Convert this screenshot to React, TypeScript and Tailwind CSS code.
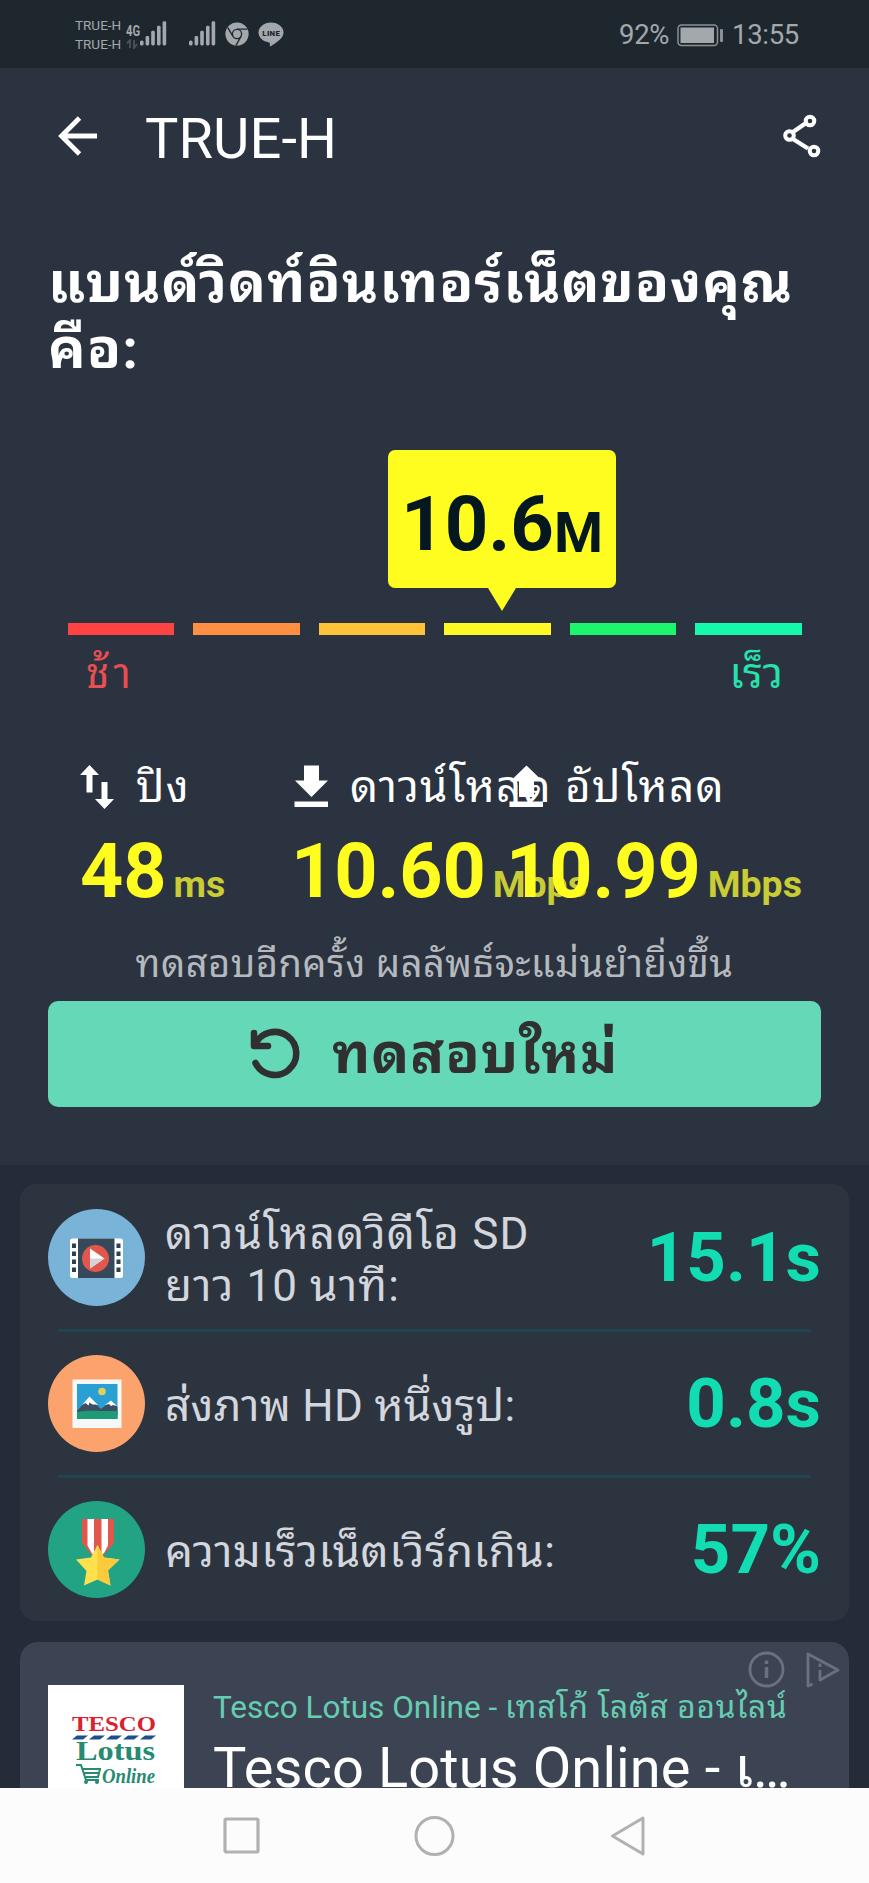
import type { ReactNode } from "react";

function Signal() {
  return (
    <svg width="27" height="26" viewBox="0 0 27 26" fill="#a3a8ad">
      <rect x="0" y="19.5" width="3.6" height="5" rx="1.6" />
      <rect x="5.6" y="15" width="3.6" height="9.5" rx="1.4" />
      <rect x="11.2" y="9.8" width="3.6" height="14.7" rx="1.4" />
      <rect x="17" y="4.8" width="3.6" height="19.7" rx="1.4" />
      <rect x="22.6" y="0.3" width="3.6" height="24.2" rx="1.4" />
    </svg>
  );
}

function StatusBar() {
  return (
    <header className="flex h-[68px] items-center bg-[#1f272e] pr-[70px] pl-[75px] text-[#a3a8ad]">
      <div className="flex w-[51px] flex-col pt-px text-[13.5px] leading-[19px]">
        <span>TRUE-H</span>
        <span>TRUE-H</span>
      </div>
      <div className="flex w-[14px] flex-col items-start pt-[3px]">
        <span className="w-[14px] origin-left scale-x-[0.8] text-[14px] leading-[16px] font-bold">4G</span>
        <svg width="12" height="10" viewBox="0 0 12 10" fill="none" stroke="#4b545c" strokeWidth="1.8">
          <path d="M4 9V1L1 4.5M8 1v8l3-4" />
        </svg>
      </div>
      <div className="flex items-center">
        <Signal />
        <div className="w-[22px]" />
        <Signal />
      </div>
      <svg className="ml-[9px]" width="24" height="24" viewBox="0 0 24 24">
        <circle cx="12" cy="12" r="11.6" fill="#a3a8ad" />
        <circle cx="12" cy="12" r="4.6" fill="none" stroke="#1f272e" strokeWidth="1.3" />
        <path d="M12 7.2h10.5M8 14.4 2.6 5.4M16 14.4 11 23.4" stroke="#1f272e" strokeWidth="1.3" fill="none" />
      </svg>
      <svg className="ml-[9px]" width="26" height="25" viewBox="0 0 26 25">
        <path
          d="M13 .6C6 .6.5 5 .5 10.6c0 5 4.500 9 10.500 9.800 1 .2 1 1 .8 3.500 0 .4.4.6.9.300C19 20.500 25.500 16 25.500 10.600 25.500 5 20 .6 13 .6z"
          fill="#a3a8ad"
        />
        <text x="4.300" y="14" fontSize="7.800" fontWeight="900" fontFamily="Roboto" textLength="17.500" fill="#1f272e">
          LINE
        </text>
      </svg>
      <div className="ml-auto flex items-center pt-0.5 text-[27.5px] leading-[34px]">
        <span className="w-[58px] tracking-[-0.3px]">92%</span>
        <svg width="47" height="23" viewBox="0 0 47 23">
          <rect x="1" y="1" width="39.500" height="20.500" rx="3.500" fill="none" stroke="#8b9095" strokeWidth="1.500" />
          <rect x="3.500" y="3.500" width="33.500" height="15.500" fill="#a3a8ad" />
          <rect x="43" y="5" width="3" height="13" rx="1" fill="#8b9095" />
        </svg>
        <span className="w-[75px] pl-[8px] tracking-[-0.3px]">13:55</span>
      </div>
    </header>
  );
}

function TitleBar() {
  return (
    <div className="flex h-[136px] items-center pr-[48px] pl-[58px] text-white">
      <svg width="40" height="40" viewBox="0 0 40 40" fill="none" stroke="currentColor" strokeWidth="4.800">
        <path d="M21.500 2 3.500 20l18 18M4 20h35" />
      </svg>
      <h1 className="ml-[47px] pt-[5px] text-[56px] leading-[64px] tracking-[0.1px]">TRUE-H</h1>
      <svg className="ml-auto" width="38" height="44" viewBox="0 0 38 44" fill="none" stroke="currentColor" strokeWidth="4">
        <path d="M23 9 10 18M10 25l15 9.500" strokeWidth="4.400" />
        <circle cx="27" cy="7" r="4.300" />
        <circle cx="6.500" cy="21.500" r="4.300" />
        <circle cx="31" cy="37" r="4.300" />
      </svg>
    </div>
  );
}

function Gauge() {
  return (
    <section className="mt-[68px]">
      <div className="ml-[388px] flex w-[228px] flex-col items-center">
        <div className="flex h-[138px] w-full items-baseline justify-center rounded-[7px] bg-[#fffd20] pt-[34px] font-bold text-[#06181f]">
          <span className="text-[76px] leading-[80px]">10.6</span>
          <span className="translate-y-0.5 text-[56px] leading-[56px]">M</span>
        </div>
        <svg width="28" height="23" viewBox="0 0 28 23">
          <path d="M0 0h28L14 23z" fill="#fffd20" />
        </svg>
      </div>
      <div className="mx-[67.500px] mt-3 grid h-3 grid-cols-6 gap-[19px]">
        <div className="bg-[#ff4242]" />
        <div className="bg-[#ff8f42]" />
        <div className="bg-[#ffc238]" />
        <div className="bg-[#fff824]" />
        <div className="bg-[#1cf56c]" />
        <div className="bg-[#16f8ac]" />
      </div>
      <div className="mt-[14px] flex justify-between pr-[86px] pl-[86px] text-[42px] leading-[50px]">
        <span className="tracking-[4px] text-[#e84e52]">ช้า</span>
        <span className="text-[#26e2ac]">เร็ว</span>
      </div>
    </section>
  );
}

function Stat({ icon, label, value, unit, width }: { icon: ReactNode; label: string; value: string; unit: string; width: string }) {
  return (
    <div className={`shrink-0 whitespace-nowrap ${width}`}>
      <div className="flex h-[60px] items-center text-white">
        {icon}
        <span className="ml-[22px] text-[44px] leading-[60px] tracking-[1.3px]">{label}</span>
      </div>
      <div className="mt-[14px] flex items-baseline font-bold text-[#fffd20]">
        <span className="text-[75.500px] leading-[80px] tracking-[-0.1px]">{value}</span>
        <span className="ml-[7px] text-[37.500px] leading-[40px] text-[#c9cc35]">{unit}</span>
      </div>
    </div>
  );
}

function Stats() {
  return (
    <section className="mt-[58px] flex h-[154px] pl-[80px]">
      <Stat
        width="w-[211px]"
        label="ปิง"
        value="48"
        unit="ms"
        icon={
          <svg className="shrink-0" width="34" height="44" viewBox="0 0 34 44" fill="#fff">
            <path d="M9.500 0 19 10h-6.500v17.500h-6V10H0zM24.500 44 15 34h6.500V17h6v17H34z" />
          </svg>
        }
      />
      <Stat
        width="w-[215px]"
        label="ดาวน์โหลด"
        value="10.60"
        unit="Mbps"
        icon={
          <svg className="ml-[3px] shrink-0" width="34" height="44" viewBox="0 0 34 44" fill="#fff">
            <path d="M10 .5h15v15h9L17.500 32 1 15.500h9zM.5 36.500H34v5.500H.5z" />
          </svg>
        }
      />
      <Stat
        width="w-[300px]"
        label="อัปโหลด"
        value="10.99"
        unit="Mbps"
        icon={
          <svg className="ml-[3px] shrink-0" width="34" height="44" viewBox="0 0 34 44" fill="#fff">
            <path d="M17.500.5 34 16.500h-9V32H10V16.500H1zM.5 36.500H34v5.500H.5z" />
          </svg>
        }
      />
    </section>
  );
}

function VideoIcon() {
  return (
    <svg className="shrink-0" width="97" height="97" viewBox="0 0 97 97">
      <circle cx="48.500" cy="48.500" r="48.500" fill="#7ab3d8" />
      <rect x="22" y="29.500" width="53" height="39.500" rx="2.500" fill="#fff" />
      <rect x="30" y="29.500" width="36.500" height="39.500" fill="#35495a" />
      <g fill="#2d4050">
        <path d="M24 34.500h4v4.500h-4zM24 42.500h4V47h-4zM24 50.500h4V55h-4zM24 58.500h4V63h-4z" />
        <path d="M68.500 34.500h4v4.500h-4zM68.500 42.500h4V47h-4zM68.500 50.500h4V55h-4zM68.500 58.500h4V63h-4z" />
      </g>
      <circle cx="47.500" cy="49.500" r="13.500" fill="#e2574c" />
      <path d="M42 39.500v20L56.500 49.500z" fill="#fff" />
      <path d="M42 49.500v10l14.500-10z" fill="#d5d3d5" />
    </svg>
  );
}

function PhotoIcon() {
  return (
    <svg className="shrink-0" width="97" height="97" viewBox="0 0 97 97">
      <circle cx="48.500" cy="48.500" r="48.500" fill="#fca26c" />
      <rect x="24.500" y="24.500" width="49" height="48.500" fill="#f6f8f7" />
      <rect x="29" y="29" width="40.500" height="35" fill="#2a9fd4" />
      <circle cx="54" cy="36.500" r="3.800" fill="#dfcf5c" />
      <path d="m29 56 12-13.500L53 54l10-8 6.500 6v8H29z" fill="#3d4f63" />
      <path d="m34 50 7.500-8.500L50 50l-3-.5-2.500 0-3-2-1 3-3-2.500zM57 50l6-4.500 6 5.500-4-1-2 1-2-2z" fill="#fff" />
      <path d="M29 57c12-2.500 26-.5 40.500-1v8H29z" fill="#1f9a76" />
    </svg>
  );
}

function MedalIcon() {
  return (
    <svg className="shrink-0" width="97" height="97" viewBox="0 0 97 97">
      <circle cx="48.500" cy="48.500" r="48.500" fill="#21a384" />
      <path d="M34 18h32v24L54 56h-9L34 42z" fill="#e2574c" />
      <path d="M39.500 18h6.500v36l-2-1.500-4.500-8zM53.500 18H60v26.500L56 52l-2.500 2z" fill="#fff" />
      <path d="m49.500 44 6.500 12.500 15.500 2-11.500 11L62.500 84.500l-13-6-13.500 6L38.500 70 28 58.500l15-2z" fill="#ffe14d" />
      <path d="m49.500 44 6.500 12.500 15.500 2-11.500 11L62.500 84.500l-13-6z" fill="#fccb3c" />
    </svg>
  );
}

function ResultRow({ icon, value, children }: { icon: ReactNode; value: string; children: ReactNode }) {
  return (
    <div className="flex h-[97px] items-center px-[28px]">
      {icon}
      <div className="ml-[20px] pt-[5px] text-[44px] leading-[52px] text-[#d3d6dd]">{children}</div>
      <div className="ml-auto text-[69px] leading-[97px] font-bold text-[#12dcb2]">{value}</div>
    </div>
  );
}

function Results() {
  return (
    <section className="mx-[20px] mt-[19px] flex h-[437px] flex-col rounded-[16px] bg-[#2c3440] pt-[25px] whitespace-nowrap">
      <ResultRow icon={<VideoIcon />} value="15.1s">
        <span className="tracking-[1.100px]">ดาวน์โหลดวิดีโอ SD</span>
        <br />
        <span className="tracking-[1.100px]">ยาว 10 นาที:</span>
      </ResultRow>
      <div className="mx-[38px] my-[23px] h-[3px] shrink-0 bg-[#214451]" />
      <ResultRow icon={<PhotoIcon />} value="0.8s">
        <span className="tracking-[0.300px]">ส่งภาพ HD หนึ่งรูป:</span>
      </ResultRow>
      <div className="mx-[38px] mt-[23px] mb-[23px] h-[3px] shrink-0 bg-[#214451]" />
      <ResultRow icon={<MedalIcon />} value="57%">
        <span className="tracking-[0.400px]">ความเร็วเน็ตเวิร์กเกิน:</span>
      </ResultRow>
    </section>
  );
}

function LotusLogo() {
  return (
    <svg className="shrink-0 bg-white" width="136" height="136" viewBox="0 0 136 136">
      <g fontFamily="Liberation Serif" fontWeight="700">
        <text x="24" y="46" fontSize="21.500" textLength="84" lengthAdjust="spacingAndGlyphs" fill="#d8232f">
          TESCO
        </text>
        <text x="28" y="75" fontSize="28" textLength="79" lengthAdjust="spacingAndGlyphs" fill="#278a72">
          Lotus
        </text>
        <text x="54" y="98" fontSize="21" fontStyle="italic" textLength="53" lengthAdjust="spacingAndGlyphs" fill="#278a72">
          Online
        </text>
      </g>
      <path
        d="m24 54.500 5-4h11l-5 4zM41 54.500l5-4h11l-5 4zM58 54.500l5-4h11l-5 4zM75 54.500l5-4h11l-5 4zM92 54.500l5-4h11l-5 4z"
        fill="#1c4f8c"
      />
      <path d="M28 80h5l5 15h13M35 84h17l-2 8H38M36 88h14" fill="none" stroke="#278a72" strokeWidth="2" />
      <circle cx="38" cy="97" r="2" fill="#278a72" />
      <circle cx="49" cy="97" r="2" fill="#278a72" />
    </svg>
  );
}

function Ad() {
  return (
    <section className="relative mx-[20px] mt-[21px] flex h-[200px] shrink-0 rounded-[18px] bg-[#3c4454] pt-[43px] pl-[28px]">
      <LotusLogo />
      <div className="ml-[29px] whitespace-nowrap">
        <p className="mt-[3px] text-[31.500px] leading-[40px] text-[#66cdb2]">
          Tesco Lotus Online - <span className="tracking-[0.800px]">เทสโก้ โลตัส ออนไลน์</span>
        </p>
        <p className="mt-[8px] text-[56px] leading-[64px] tracking-[0.100px] text-white">Tesco Lotus Online - เ…</p>
      </div>
      <div className="absolute top-[9px] right-[9px] flex gap-[20px]">
        <svg width="37" height="38" viewBox="0 0 37 38" fill="none" stroke="#697080" strokeWidth="2.800">
          <circle cx="18.500" cy="18.500" r="16.500" />
          <path d="M18.500 9.500v3.500M18.500 16v11" strokeWidth="3.500" />
        </svg>
        <svg width="35" height="38" viewBox="0 0 35 38" fill="none" stroke="#697080" strokeWidth="2.800" strokeLinejoin="round">
          <path d="M7.500 33 3 35V3l30 16-18 10V19M15 12.500V16" />
        </svg>
      </div>
    </section>
  );
}

function NavBar() {
  return (
    <nav className="flex h-[95px] shrink-0 items-center bg-[#fcfcfc] pl-[223px]">
      <svg width="37" height="40" viewBox="0 0 37 40" fill="none" stroke="#b1b1b1" strokeWidth="3.200">
        <rect x="2" y="3" width="33" height="33" rx="1.500" />
      </svg>
      <svg className="ml-[154px]" width="42" height="42" viewBox="0 0 42 42" fill="none" stroke="#b1b1b1" strokeWidth="3">
        <circle cx="20.500" cy="21" r="18.500" />
      </svg>
      <svg className="ml-[153px]" width="38" height="42" viewBox="0 0 38 42" fill="none" stroke="#b1b1b1" strokeWidth="3" strokeLinejoin="round">
        <path d="M34 3v36L3.500 21z" />
      </svg>
    </nav>
  );
}

export default function App() {
  return (
    <div className="flex h-[1883px] w-[869px] flex-col overflow-hidden bg-[#252c39] font-['Roboto','Noto_Sans_Thai_Looped','Noto_Sans_Thai','Noto_Sans',sans-serif]">
      <main className="h-[1788px] shrink-0 overflow-hidden">
        <div className="h-[1165px] bg-[#2a333f]">
          <StatusBar />
          <TitleBar />
          <h2 className="mt-[46px] pl-[48px] text-[56px] leading-[66px] font-bold tracking-[1px] whitespace-nowrap text-white">
            แบนด์วิดท์อินเทอร์เน็ตของคุณ
            <br />
            คือ:
          </h2>
          <Gauge />
          <Stats />
          <p className="mt-[23px] text-center text-[38px] leading-[60px] tracking-[0.500px] whitespace-nowrap text-[#b5b9be]">
            ทดสอบอีกครั้ง ผลลัพธ์จะแม่นยำยิ่งขึ้น
          </p>
          <button className="mt-[7px] ml-[48px] flex h-[106px] w-[773px] items-center rounded-[10px] bg-[#64d8b7] pl-[201px] text-[#303030]">
            <svg width="51" height="52" viewBox="0 0 51 52" fill="none" stroke="currentColor" strokeWidth="6.500" strokeLinecap="round" strokeLinejoin="round">
              <path d="M5 5v13h14" />
              <path d="M6 17A21.500 21.500 0 1 1 6.500 35" />
            </svg>
            <span className="ml-[32px] text-[56px] leading-[80px] font-bold tracking-[1px] whitespace-nowrap">ทดสอบใหม่</span>
          </button>
        </div>
        <Results />
        <Ad />
      </main>
      <NavBar />
    </div>
  );
}
